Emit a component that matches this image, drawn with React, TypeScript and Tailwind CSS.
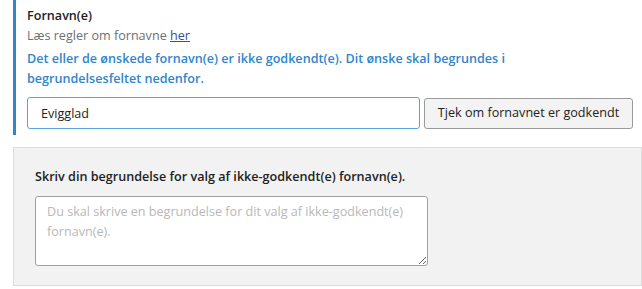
import React from 'react';

const font = { fontFamily: '"Open Sans", "Noto Sans", sans-serif' };

export default function App() {
  return (
    <div className="w-[642px] h-[289px] bg-white overflow-hidden text-[12.6px]" style={font}>
      <div className="ml-[13px] border-l-[3px] border-[#2f86cc] pl-[11px] pb-[6px] pt-[6px]">
        <div className="font-semibold text-[#222] leading-[20px]">Fornavn(e)</div>
        <div className="text-[#707070] leading-[20px]">
          Læs regler om fornavne{' '}
          <a href="#" className="text-[#3b4f8a] underline">her</a>
        </div>
        <p className="font-semibold text-[#2f86cc] leading-[20px] mt-[3px] w-[490px]">
          Det eller de ønskede fornavn(e) er ikke godkendt(e). Dit ønske skal begrundes i begrundelsesfeltet nedenfor.
        </p>
        <div className="flex items-center gap-[4px] mt-[8px]">
          <input
            defaultValue="Evigglad"
            className="w-[393px] h-[32px] rounded-[3px] border border-[#5aa3dc] px-[13px] text-[12.6px] text-[#222] outline-none"
            style={font}
          />
          <button className="w-[209px] h-[31px] rounded-[3px] border border-[#9a9a9a] bg-[#f3f3f3] text-[#222] font-medium whitespace-nowrap">
            Tjek om fornavnet er godkendt
          </button>
        </div>
      </div>
      <div className="ml-[13px] mt-[12px] bg-[#f2f2f2] border border-[#dcdcdc] pt-[19px] pb-[19px] pl-[21px]">
        <div className="font-semibold text-[#222] leading-[20px]">
          Skriv din begrundelse for valg af ikke-godkendt(e) fornavn(e).
        </div>
        <textarea
          placeholder="Du skal skrive en begrundelse for dit valg af ikke-godkendt(e) fornavn(e)."
          className="block mt-[9px] w-[393px] h-[70px] rounded-[3px] border border-[#a0a0a0] bg-white px-[11px] py-[5px] leading-[20px] text-[12.6px] placeholder:text-[#b8b8b8]"
          style={font}
        />
      </div>
    </div>
  );
}
